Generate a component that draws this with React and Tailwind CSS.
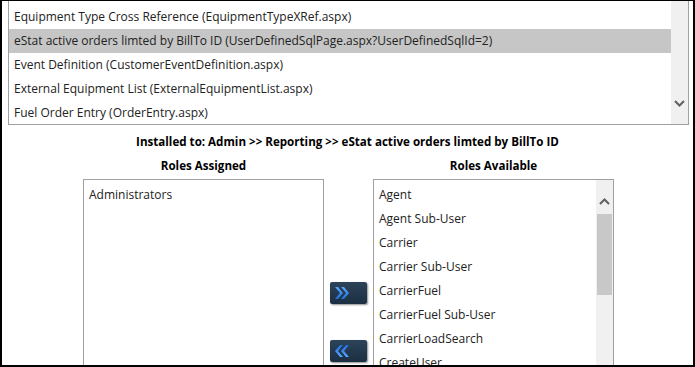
import React from 'react';

const pages = [
    'Equipment Type Cross Reference (EquipmentTypeXRef.aspx)',
    'eStat active orders limted by BillTo ID (UserDefinedSqlPage.aspx?UserDefinedSqlId=2)',
    'Event Definition (CustomerEventDefinition.aspx)',
    'External Equipment List (ExternalEquipmentList.aspx)',
    'Fuel Order Entry (OrderEntry.aspx)',
];

const available = [
    'Agent',
    'Agent Sub-User',
    'Carrier',
    'Carrier Sub-User',
    'CarrierFuel',
    'CarrierFuel Sub-User',
    'CarrierLoadSearch',
    'CreateUser',
];

const Chevron = ({ up }) => (
    <svg width="11" height="7" viewBox="0 0 11 7">
        <path
            d={up ? 'M1 6 L5.5 1.5 L10 6' : 'M1 1 L5.5 5.5 L10 1'}
            fill="none"
            stroke="#606060"
            strokeWidth="2"
        />
    </svg>
);

const MoveButton = ({ left }) => (
    <button className="w-[37px] h-[22px] rounded-[2px] bg-gradient-to-b from-[#2c4359] to-[#1c2f42] shadow-[1px_1px_2px_rgba(0,0,0,0.45)] flex items-center pl-[4px]">
        <svg width="16" height="14" viewBox="0 0 16 14" className={left ? 'rotate-180' : ''}>
            <defs>
                <linearGradient id={left ? 'gl' : 'gr'} x1="0" y1="0" x2="0" y2="1">
                    <stop offset="0" stopColor="#5aa6ff" />
                    <stop offset="1" stopColor="#1f6fe0" />
                </linearGradient>
            </defs>
            <path
                d="M1 1 L4 1 L9 7 L4 13 L1 13 L6 7 Z M7 1 L10 1 L15 7 L10 13 L7 13 L12 7 Z"
                fill={`url(#${left ? 'gl' : 'gr'})`}
            />
        </svg>
    </button>
);

export default function App() {
    return (
        <div className="w-[695px] h-[367px] overflow-hidden bg-white border-black border-t border-l-2 border-r-2 border-b-2 font-['Open_Sans',sans-serif] text-[12px] text-[#222]">
            <div className="ml-[6px] w-[681px] h-[124px] border-x border-b border-[#a0a0a0] flex">
                <div className="flex-1 pt-[4px]">
                    {pages.map((p, i) => (
                        <div
                            key={p}
                            className={`h-[24px] leading-[24px] pl-[5px] whitespace-nowrap ${i === 1 ? 'bg-[#c6c6c6]' : ''}`}
                        >
                            {p}
                        </div>
                    ))}
                </div>
                <div className="w-[17px] bg-[#f0f0f0] flex flex-col justify-end items-center pb-[17px]">
                    <Chevron />
                </div>
            </div>

            <div className="mt-[9px] h-[16px] leading-[16px] text-center font-bold text-[11.6px] text-black">
                Installed to: Admin &gt;&gt; Reporting &gt;&gt; eStat active orders limted by BillTo ID
            </div>

            <div className="flex ml-[81px] mt-[8px]">
                <div className="w-[241px]">
                    <div className="h-[16px] leading-[16px] text-center font-bold text-[11.6px] text-black">Roles Assigned</div>
                    <div className="mt-[5px] h-[200px] border border-[#a0a0a0] pt-[3px] pl-[5px]">
                        <div className="h-[24px] leading-[24px]">Administrators</div>
                    </div>
                </div>

                <div className="w-[49px] pt-[124px] flex flex-col items-center gap-[36px]">
                    <MoveButton />
                    <MoveButton left />
                </div>

                <div className="w-[241px]">
                    <div className="h-[16px] leading-[16px] text-center font-bold text-[11.6px] text-black">Roles Available</div>
                    <div className="mt-[5px] h-[200px] border border-[#a0a0a0] flex">
                        <div className="flex-1 pt-[3px] pl-[5px]">
                            {available.map((r) => (
                                <div key={r} className="h-[24px] leading-[24px] whitespace-nowrap">
                                    {r}
                                </div>
                            ))}
                        </div>
                        <div className="w-[17px] bg-[#f0f0f0] flex flex-col items-center">
                            <div className="h-[34px] pt-[18px] flex justify-center">
                                <Chevron up />
                            </div>
                            <div className="w-[15px] h-[81px] bg-[#c8c8c8]" />
                        </div>
                    </div>
                </div>
            </div>
        </div>
    );
}
